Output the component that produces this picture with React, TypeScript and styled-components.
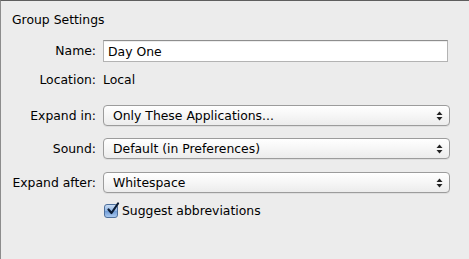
import React from "react";
import styled, { createGlobalStyle } from "styled-components";

const Global = createGlobalStyle`
  html, body { margin: 0; padding: 0; background: #ececec; }
  body { font-family: "DejaVu Sans", "Liberation Sans", sans-serif; font-size: 12.4px; color: #000; }
`;

const Panel = styled.div`
  box-sizing: border-box;
  width: 469px;
  height: 259px;
  background: #ececec;
  border-top: 1px solid #5e5e5e;
  border-left: 1px solid #8c8c8c;
  padding: 11px 19px 0 0;
  display: flex;
  flex-direction: column;
`;

const Title = styled.div`
  padding-left: 11px;
  line-height: 16px;
  height: 16px;
`;

const Row = styled.div<{ $mt: number; $h: number }>`
  display: grid;
  grid-template-columns: 95px 1fr;
  column-gap: 7px;
  align-items: center;
  margin-top: ${(p) => p.$mt}px;
  height: ${(p) => p.$h}px;
`;

const Label = styled.div`
  text-align: right;
  white-space: nowrap;
  line-height: 16px;
`;

const Value = styled.div`
  line-height: 16px;
`;

const TextField = styled.div`
  box-sizing: border-box;
  height: 22px;
  margin-right: 2px;
  background: #fff;
  border: 1px solid #b3b3b3;
  border-top-color: #8e8e8e;
  box-shadow: inset 0 1px 0 #ededed;
  padding: 0 4px;
  display: flex;
  align-items: center;
`;

const Popup = styled.div`
  box-sizing: border-box;
  height: 21px;
  border: 1px solid #9c9c9c;
  border-radius: 4px;
  background: linear-gradient(#ffffff, #f6f6f6 50%, #ececec);
  box-shadow: 0 1px 0 rgba(0, 0, 0, 0.06);
  padding: 0 0 0 9px;
  display: flex;
  align-items: center;
  justify-content: space-between;
`;

const Arrows = styled.svg`
  width: 7px;
  height: 10px;
  margin-right: 6px;
`;

const CheckRow = styled.label`
  display: flex;
  align-items: center;
  gap: 4px;
  grid-column: 2;
  line-height: 16px;
`;

const Box = styled.span`
  box-sizing: border-box;
  width: 14px;
  height: 14px;
  margin-left: 1px;
  border-radius: 3px;
  border: 1px solid #4d6f9c;
  background: linear-gradient(#c9dcf3, #8fb4e3 50%, #6f9bd6 51%, #a9c8ee);
  display: inline-flex;
  align-items: center;
  justify-content: center;
  position: relative;
`;

const Mark = styled.svg`
  position: absolute;
  left: 1px;
  top: -3px;
  width: 14px;
  height: 14px;
`;

const UpDown = () => (
  <Arrows viewBox="0 0 7 10">
    <path d="M3.5 0.5 L6.5 4 L0.5 4 Z" fill="#222" />
    <path d="M3.5 9.5 L6.5 6 L0.5 6 Z" fill="#222" />
  </Arrows>
);

const Select = ({ value }: { value: string }) => (
  <Popup>
    <span>{value}</span>
    <UpDown />
  </Popup>
);

export default function App() {
  return (
    <>
      <Global />
      <Panel>
        <Title>Group Settings</Title>
        <Row $mt={12} $h={22}>
          <Label>Name:</Label>
          <TextField>Day One</TextField>
        </Row>
        <Row $mt={10} $h={16}>
          <Label>Location:</Label>
          <Value>Local</Value>
        </Row>
        <Row $mt={17} $h={21}>
          <Label>Expand in:</Label>
          <Select value="Only These Applications..." />
        </Row>
        <Row $mt={12} $h={21}>
          <Label>Sound:</Label>
          <Select value="Default (in Preferences)" />
        </Row>
        <Row $mt={13} $h={21}>
          <Label>Expand after:</Label>
          <Select value="Whitespace" />
        </Row>
        <Row $mt={10} $h={16}>
          <CheckRow>
            <Box>
              <Mark viewBox="0 0 14 14">
                <path d="M2.5 7.5 L5.5 11 L12 1.5" fill="none" stroke="#0b1b33" strokeWidth="2.2" strokeLinecap="round" strokeLinejoin="round" />
              </Mark>
            </Box>
            Suggest abbreviations
          </CheckRow>
        </Row>
      </Panel>
    </>
  );
}
